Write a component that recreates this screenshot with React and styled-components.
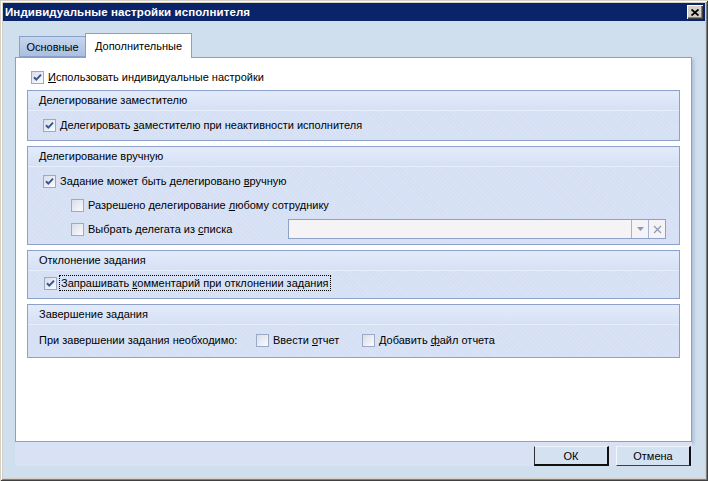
import React from 'react';
import styled, { createGlobalStyle } from 'styled-components';

const GlobalStyle = createGlobalStyle`
    html, body {
        margin: 0;
        padding: 0;
        width: 708px;
        height: 481px;
        overflow: hidden;
        background: #d4d0c8;
    }
    body {
        font-family: "Liberation Sans", Arial, sans-serif;
        font-size: 11px;
        color: #000;
    }
`;

const Window = styled.div`
    width: 708px;
    height: 481px;
    box-sizing: border-box;
    padding: 3px;
    display: flex;
    flex-direction: column;
    background: #cfdfee;
    box-shadow:
        inset 1px 1px 0 #d4d0c8,
        inset -1px -1px 0 #404040,
        inset 2px 2px 0 #ffffff,
        inset -2px -2px 0 #808080,
        inset 3px 3px 0 #d4d0c8,
        inset -3px -3px 0 #d4d0c8;
`;

const TitleBar = styled.div`
    height: 18px;
    background: #0a246a;
    display: flex;
    align-items: center;
    justify-content: space-between;
    padding: 0 2px 0 2px;
`;

const Title = styled.span`
    color: #fff;
    font-weight: bold;
    font-size: 11.5px;
    letter-spacing: 0.1px;
`;

const CloseButton = styled.div`
    width: 16px;
    height: 14px;
    box-sizing: border-box;
    background: #d4d0c8;
    display: flex;
    align-items: center;
    justify-content: center;
    box-shadow:
        inset 1px 1px 0 #ffffff,
        inset -1px -1px 0 #404040,
        inset -2px -2px 0 #808080;
`;

const Body = styled.div`
    flex: 1;
    display: flex;
    flex-direction: column;
    padding: 12px 13px 12px 12px;
`;

const TabStrip = styled.div`
    height: 24px;
    display: flex;
    align-items: flex-end;
    padding-left: 4px;
    position: relative;
    z-index: 1;
`;

const Tab = styled.div`
    box-sizing: border-box;
    width: ${p => p.$width}px;
    height: ${p => (p.$active ? 25 : 21)}px;
    margin-bottom: ${p => (p.$active ? -1 : 0)}px;
    border: 1px solid #8ba0c8;
    border-bottom: ${p => (p.$active ? 'none' : '1px solid #8ba0c8')};
    margin-left: ${p => (p.$active ? -1 : 0)}px;
    background: ${p => (p.$active ? '#ffffff' : 'linear-gradient(#c7d6ee, #a9bfe2)')};
    display: flex;
    align-items: center;
    justify-content: center;
    padding-top: ${p => (p.$active ? 0 : 1)}px;
`;

const Panel = styled.div`
    flex: 1;
    box-sizing: border-box;
    background: #ffffff;
    border: 1px solid #8ba0c8;
    box-shadow: 2px 2px 3px rgba(110, 130, 170, 0.35);
    padding: 9px 11px;
    display: flex;
    flex-direction: column;
`;

const TopRow = styled.div`
    height: 20px;
    display: flex;
    align-items: center;
    padding-left: 4px;
    margin-bottom: 3px;
`;

const Group = styled.section`
    border: 1px solid #8ea2c9;
    background-color: #d5e0f5;
    background-image: repeating-linear-gradient(45deg, rgba(255, 255, 255, 0.12) 0 1px, transparent 1px 3px);
    & + & {
        margin-top: 5px;
    }
`;

const GroupHeader = styled.div`
    height: 19px;
    line-height: 19px;
    padding-left: 11px;
    background: linear-gradient(#e3ebfb, #d6e1f6);
    border-bottom: 1px solid #e6edfb;
`;

const GroupBody = styled.div`
    padding: ${p => p.$top ?? 2}px 13px ${p => p.$bottom ?? 3}px 0;
`;

const Row = styled.div`
    height: 24px;
    display: flex;
    align-items: center;
    padding-left: ${p => p.$indent}px;
`;

const Item = styled.label`
    display: flex;
    align-items: center;
    width: ${p => (p.$width ? `${p.$width}px` : 'auto')};
    flex: none;
`;

const Box = styled.span`
    width: 13px;
    height: 13px;
    box-sizing: border-box;
    border: 1px solid #9aa9c6;
    background: linear-gradient(135deg, #d8dde8, #fbfcfe);
    display: flex;
    align-items: center;
    justify-content: center;
    flex: none;
    margin-right: 2px;
`;

const Label = styled.span`
    padding: 0 1px;
    line-height: 14px;
    border: 1px dotted ${p => (p.$focus ? '#000' : 'transparent')};
`;

const Key = styled.span`
    text-decoration: underline;
`;

const Text = styled.span`
    width: ${p => p.$width}px;
    flex: none;
`;

const Combo = styled.div`
    width: 378px;
    height: 20px;
    box-sizing: border-box;
    margin-left: auto;
    border: 1px solid #8ea2c9;
    background: #f6f3f7;
    display: flex;
`;

const ComboField = styled.div`
    flex: 1;
`;

const ComboButton = styled.div`
    width: 16px;
    border-left: 1px solid #a4b3d2;
    display: flex;
    align-items: center;
    justify-content: center;
`;

const ButtonBar = styled.div`
    height: 24px;
    box-sizing: border-box;
    background: #d8e2f4;
    display: flex;
    align-items: flex-end;
    justify-content: flex-end;
    gap: 7px;
    padding-right: 1px;
`;

const Button = styled.div`
    width: 75px;
    height: 20px;
    box-sizing: border-box;
    background: #d4e1f1;
    display: flex;
    align-items: center;
    justify-content: center;
    border-top: 1px solid #eef3fa;
    border-left: 1px solid ${p => (p.$default ? '#303030' : '#f4f7fc')};
    border-right: 2px solid #101010;
    border-bottom: ${p => (p.$default ? '2px solid #101010' : '1px solid #404040')};
`;

function CheckBox({ checked }) {
    return (
        <Box>
            {checked && (
                <svg width="9" height="9" viewBox="0 0 9 9">
                    <path d="M1 4.2 L3.3 6.6 L8 1.6" fill="none" stroke="#3a5590" strokeWidth="2" />
                </svg>
            )}
        </Box>
    );
}

function Check({ checked, focus, width, children }) {
    return (
        <Item $width={width}>
            <CheckBox checked={checked} />
            <Label $focus={focus}>{children}</Label>
        </Item>
    );
}

export default function App() {
    return (
        <>
            <GlobalStyle />
            <Window>
                <TitleBar>
                    <Title>Индивидуальные настройки исполнителя</Title>
                    <CloseButton>
                        <svg width="8" height="7" viewBox="0 0 8 7">
                            <path d="M0.5 0.5 L7.5 6.5 M7.5 0.5 L0.5 6.5" stroke="#000" strokeWidth="1.8" />
                        </svg>
                    </CloseButton>
                </TitleBar>
                <Body>
                    <TabStrip>
                        <Tab $width={67}>Основные</Tab>
                        <Tab $width={107} $active>Дополнительные</Tab>
                    </TabStrip>
                    <Panel>
                        <TopRow>
                            <Check checked><Key>И</Key>спользовать индивидуальные настройки</Check>
                        </TopRow>

                        <Group>
                            <GroupHeader>Делегирование заместителю</GroupHeader>
                            <GroupBody>
                                <Row $indent={15}>
                                    <Check checked>Делегировать <Key>з</Key>аместителю при неактивности исполнителя</Check>
                                </Row>
                            </GroupBody>
                        </Group>

                        <Group>
                            <GroupHeader>Делегирование вручную</GroupHeader>
                            <GroupBody>
                                <Row $indent={15}>
                                    <Check checked>Задание может быть делегировано <Key>в</Key>ручную</Check>
                                </Row>
                                <Row $indent={43}>
                                    <Check>Разрешено делегирование <Key>л</Key>юбому сотруднику</Check>
                                </Row>
                                <Row $indent={43}>
                                    <Check>Выбрать делегата из <Key>с</Key>писка</Check>
                                    <Combo>
                                        <ComboField />
                                        <ComboButton>
                                            <svg width="7" height="4" viewBox="0 0 7 4">
                                                <path d="M0 0 H7 L3.5 4 Z" fill="#8c98b4" />
                                            </svg>
                                        </ComboButton>
                                        <ComboButton>
                                            <svg width="9" height="9" viewBox="0 0 9 9">
                                                <path d="M1 1 L8 8 M8 1 L1 8" stroke="#8c98b4" strokeWidth="1.2" />
                                            </svg>
                                        </ComboButton>
                                    </Combo>
                                </Row>
                            </GroupBody>
                        </Group>

                        <Group>
                            <GroupHeader>Отклонение задания</GroupHeader>
                            <GroupBody $top={0}>
                                <Row $indent={16}>
                                    <Check checked focus>Запрашивать <Key>к</Key>омментарий при отклонении задания</Check>
                                </Row>
                            </GroupBody>
                        </Group>

                        <Group>
                            <GroupHeader>Завершение задания</GroupHeader>
                            <GroupBody $top={3} $bottom={5}>
                                <Row $indent={11}>
                                    <Text $width={217}>При завершении задания необходимо:</Text>
                                    <Check width={106}>Ввести <Key>о</Key>тчет</Check>
                                    <Check>Добавить <Key>ф</Key>айл отчета</Check>
                                </Row>
                            </GroupBody>
                        </Group>
                    </Panel>
                    <ButtonBar>
                        <Button $default>ОК</Button>
                        <Button>Отмена</Button>
                    </ButtonBar>
                </Body>
            </Window>
        </>
    );
}
